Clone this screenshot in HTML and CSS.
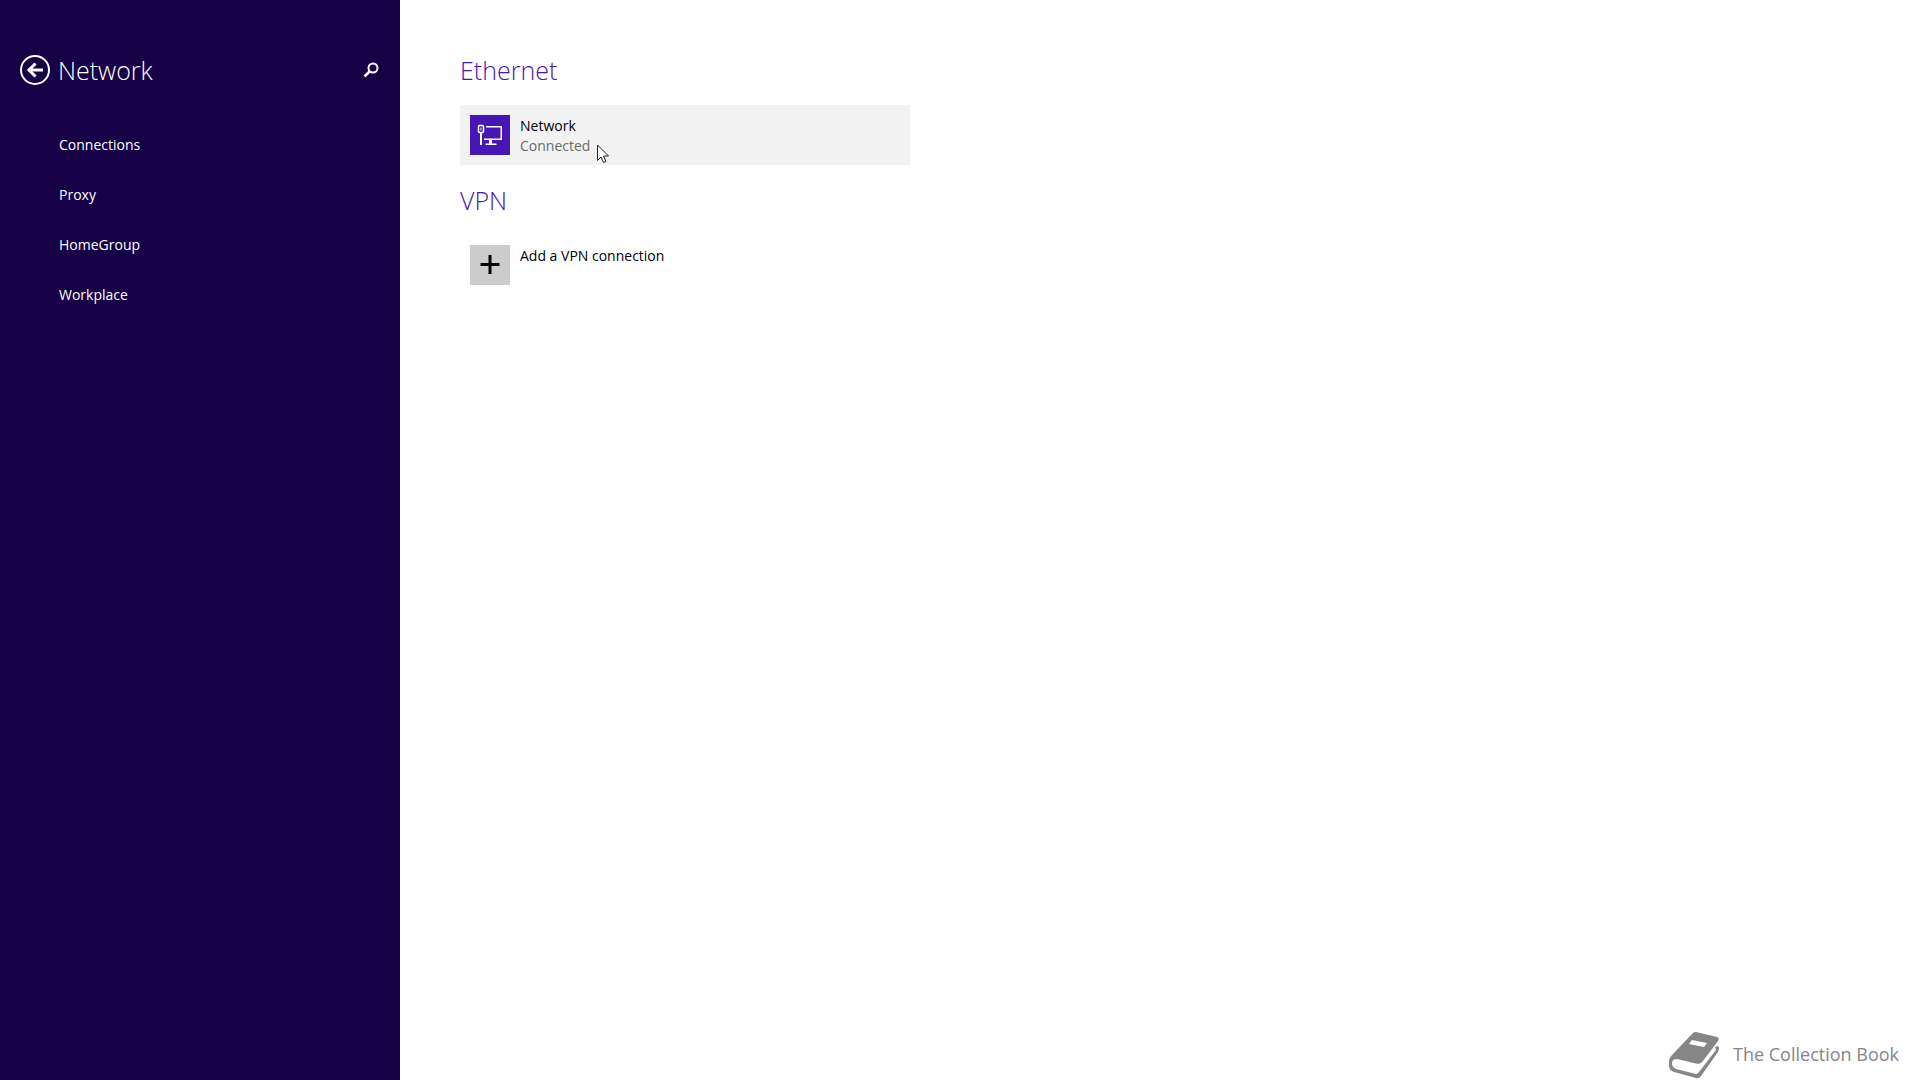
FILE: index.html
```html
<!DOCTYPE html>
<html lang="en">
<head>
    <meta charset="UTF-8">
    <meta name="viewport" content="width=device-width, initial-scale=1.0">
    <title>Network</title>
    <link rel="stylesheet" href="styles.css">
</head>
<body>
    <aside class="sidebar">
        <header class="sidebar-head">
            <button type="button" aria-label="Back">
                <svg width="32" height="32" viewBox="0 0 32 32" fill="none" stroke="#fff">
                    <circle cx="16" cy="16" r="14" stroke-width="2"/>
                    <path d="M9 16H24" stroke-width="3"/>
                    <path d="M16.500 9.500L10 16L16.500 22.500" stroke-width="3"/>
                </svg>
            </button>
            <h1>Network</h1>
            <button type="button" aria-label="Search">
                <svg width="16" height="16" viewBox="0 0 16 16" fill="none" stroke="#fff">
                    <circle cx="10" cy="6" r="4.500" stroke-width="2"/>
                    <path d="M7 9L1.500 14.500" stroke-width="2.500"/>
                </svg>
            </button>
        </header>
        <nav class="menu">
            <a href="#">Connections</a>
            <a href="#">Proxy</a>
            <a href="#">HomeGroup</a>
            <a href="#">Workplace</a>
        </nav>
    </aside>
    <main class="content">
        <section>
            <h2>Ethernet</h2>
            <button type="button" class="item active">
                <svg class="tile" viewBox="0 0 40 40" fill="none" stroke="#fff" stroke-width="1.500">
                    <rect x="8.500" y="10.500" width="5" height="7" rx="1"/>
                    <path d="M11 12.500V15.500" stroke-width="1"/>
                    <path d="M11 17.500V30" stroke-width="2"/>
                    <path d="M16 11.750H31.250V24.250H14M15.500 29.250H26.500"/>
                    <path d="M20.500 24.500V29" stroke-width="3"/>
                </svg>
                <span class="item-text">
                    <span>Network</span>
                    <span class="status">Connected</span>
                </span>
            </button>
        </section>
        <section>
            <h2>VPN</h2>
            <button type="button" class="item">
                <svg class="tile tile-add" viewBox="0 0 40 40" stroke="#000" stroke-width="3">
                    <path d="M10.500 19.500H29.500M20 10V29"/>
                </svg>
                <span class="item-text">
                    <span>Add a VPN connection</span>
                </span>
            </button>
        </section>
    </main>
    <footer class="brand">
        <svg width="52" height="48" viewBox="0 0 52 48">
            <path fill="#868686" d="M25 1Q26 0 28 0L49 5Q52 6 50 9L35 29Q33 32 30 32L9 27Q4 27 4 31Q4 35 8 37L28 42Q30 42 31 40L48 18L47 15L50 14Q52 16 50 20L33 44Q31 47 28 46L6 40Q0 38 1 31Q1 26 4 23Z"/>
            <path fill="#fff" d="M24 8L39 11L36 15L21 12Z"/>
        </svg>
        <span>The Collection Book</span>
    </footer>
    <!-- mouse pointer -->
    <svg class="cursor" width="13" height="20" viewBox="0 0 13 20">
        <path fill="#fff" stroke="#222" d="M.5 1V16.500L4 13L6.500 18.500L9 17.500L6.500 12H11.500Z"/>
    </svg>
</body>
</html>
```
FILE: styles.css
```css
* {box-sizing: border-box;}
body {margin: 0; min-height: 100vh; display: flex; background: #fff; color: #000; font: 14px/20px "Open Sans", "Noto Sans", sans-serif;}
h1, h2 {margin: 0; font-size: 25px; line-height: 40px; font-weight: 300;}
button {border: 0; padding: 0; background: none; font: inherit; color: inherit;}
svg {display: block;}

.sidebar {width: 400px; flex: none; padding: 50px 21px 0 19px; background: #160046; color: #fff;}
.sidebar-head {display: flex; align-items: center; gap: 7px;}
.sidebar-head h1 {flex: 1;}
.menu {margin: 30px 0 0 40px;}
.menu a {display: block; line-height: 50px; color: #fff; text-decoration: none;}

.content {flex: 1; padding: 50px 60px;}
.content h2 {color: #4617b4;}
.content section {margin-bottom: 15px;}
.item {display: flex; width: 100%; max-width: 450px; height: 60px; margin-top: 15px; padding: 10px; gap: 10px; text-align: left;}
.item.active {background: #f2f2f2;}
.item-text {display: flex; flex-direction: column; padding-top: 1px;}
.status {color: #6b6b6b;}
.tile {width: 40px; height: 40px; background: #4617b4;}
.tile-add {background: #ccc;}

.brand {position: absolute; right: 21px; bottom: 0; display: flex; align-items: center; gap: 13px; color: #868686; font-size: 18px;}
.brand span {padding-bottom: 4px;}
.cursor {position: absolute; left: 597px; top: 144px;}
```
